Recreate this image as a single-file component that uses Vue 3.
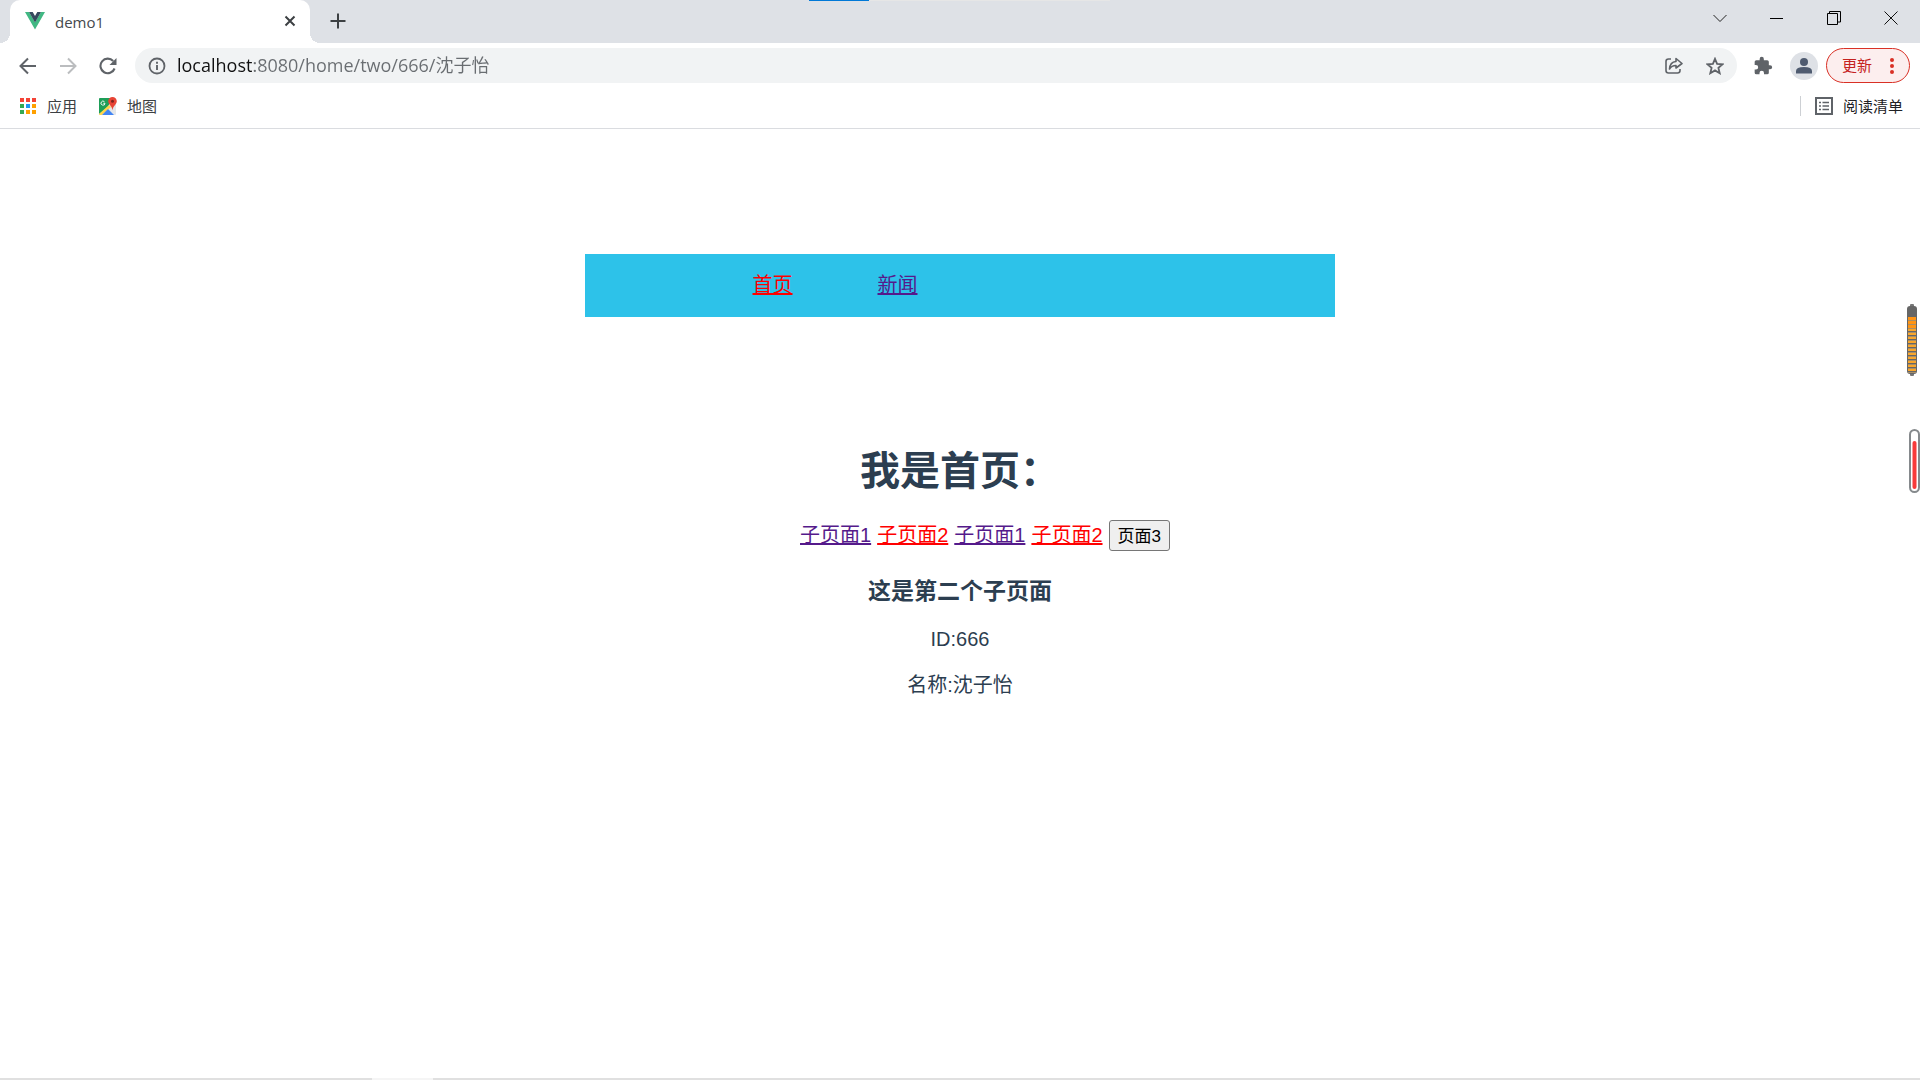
<script setup>
import { ref } from 'vue'

const address = ref('localhost:8080/home/two/666/沈子怡')
const childLinks = [
  { label: '子页面1', active: false },
  { label: '子页面2', active: true },
  { label: '子页面1', active: false },
  { label: '子页面2', active: true },
]
const appColors = ['#f44336', '#f44336', '#f44336', '#34a853', '#2196f3', '#ffa000', '#34a853', '#ffa000', '#ffa000']
</script>

<template>
  <div class="browser">
    <header class="chrome">
      <div class="tab-strip">
        <div class="tab">
          <svg class="icon" width="20" height="18" viewBox="0 0 20 18">
            <path fill="#41b883" d="M0 0h4l6 10.300L16 0h4L10 17.500z" />
            <path fill="#35495e" d="M4 0h3.700L10 4l2.300-4H16L10 10.400z" />
          </svg>
          <span class="tab-title">demo1</span>
          <button class="tab-close" aria-label="关闭标签页">
            <svg class="icon" width="12" height="12" viewBox="0 0 12 12"><path d="M1.500 1.500l9 9m0-9l-9 9" stroke="#3c4043" stroke-width="2" /></svg>
          </button>
        </div>
        <button class="new-tab" aria-label="新标签页">
          <svg class="icon" width="16" height="16" viewBox="0 0 16 16"><path d="M8 .5v15M.5 8h15" stroke="#3c4043" stroke-width="2" /></svg>
        </button>
        <div class="window-controls">
          <button aria-label="搜索标签页"><svg class="icon" width="14" height="14" viewBox="0 0 14 14"><path d="M.5 4L7 10.500 13.500 4" fill="none" stroke="#222" /></svg></button>
          <button aria-label="最小化"><svg class="icon" width="14" height="14" viewBox="0 0 14 14"><path d="M0 7.500h13" stroke="#000" /></svg></button>
          <button aria-label="还原"><svg class="icon" width="14" height="14" viewBox="0 0 14 14"><path d="M.5 2.500h10v11H.5zM2.500 2.500v-2h11v10.500h-3" fill="none" stroke="#000" /></svg></button>
          <button aria-label="关闭"><svg class="icon" width="14" height="14" viewBox="0 0 14 14"><path d="M.5 .5l13 13m0-13l-13 13" stroke="#111" /></svg></button>
        </div>
        <div class="load-track"><div class="load-value"></div></div>
      </div>

      <div class="toolbar">
        <button class="tool" aria-label="后退"><svg class="icon" width="18" height="18" viewBox="0 0 18 18"><path d="M17 9H2M9 1.500L1.500 9 9 16.500" fill="none" stroke="#5f6368" stroke-width="2" /></svg></button>
        <button class="tool" aria-label="前进"><svg class="icon" width="18" height="18" viewBox="0 0 18 18"><path d="M1 9h15M9 1.500L16.500 9 9 16.500" fill="none" stroke="#bbbdbf" stroke-width="2" /></svg></button>
        <button class="tool" aria-label="重新加载"><svg class="icon" width="18" height="18" viewBox="0 0 18 18"><path d="M15.600 11.500A7.300 7.300 0 1 1 14.200 4" fill="none" stroke="#5f6368" stroke-width="2.100" /><path d="M17.500 1v7h-7z" fill="#5f6368" /></svg></button>
        <div class="omnibox">
          <svg class="icon" width="18" height="18" viewBox="0 0 18 18"><circle cx="9" cy="9" r="7.500" fill="none" stroke="#5f6368" stroke-width="1.800" /><path d="M9 8v5M9 4.700v2" stroke="#5f6368" stroke-width="1.900" /></svg>
          <input v-model="address" class="address" type="text" aria-label="地址栏" />
          <button class="box-tool" aria-label="分享"><svg class="icon" width="18" height="18" viewBox="0 0 18 18"><path d="M6 2H3.500Q1 2 1 4.500v9Q1 16 3.500 16h9q2.500 0 2.500-2.500V12M11 1.500L17 6.500 11 11V8.500Q6.500 8.500 4.500 12 5 5 11 4.500z" fill="none" stroke="#5f6368" stroke-width="1.600" stroke-linejoin="round" /></svg></button>
          <button class="box-tool" aria-label="收藏"><svg class="icon" width="18" height="18" viewBox="0 0 18 18"><path d="M9 1.800l2.100 5 5.500.500-4.200 3.600 1.300 5.300L9 13.400l-4.700 2.800 1.300-5.300-4.200-3.600 5.500-.5z" fill="none" stroke="#5f6368" stroke-width="1.800" /></svg></button>
        </div>
        <button class="tool extensions" aria-label="扩展程序"><svg class="icon" width="20" height="20" viewBox="0 0 24 24"><path fill="#5f6368" d="M20.500 11H19V7a2 2 0 0 0-2-2h-4V3.500a2.500 2.500 0 0 0-5 0V5H4a2 2 0 0 0-2 2v3.800h1.500a2.700 2.700 0 0 1 0 5.400H2V20a2 2 0 0 0 2 2h3.800v-1.500a2.700 2.700 0 0 1 5.400 0V22H17a2 2 0 0 0 2-2v-4h1.500a2.500 2.500 0 0 0 0-5z" /></svg></button>
        <button class="avatar" aria-label="用户"><svg class="icon" width="28" height="28" viewBox="0 0 28 28"><circle cx="14" cy="14" r="14" fill="#dee1e6" /><circle cx="14" cy="10" r="4" fill="#4f5b70" /><path d="M6 21.500V19q0-4 8-4t8 4v2.500z" fill="#4f5b70" /></svg></button>
        <button class="update">
          <span>更新</span>
          <svg class="icon" width="4" height="16" viewBox="0 0 4 16"><g fill="#d93025"><circle cx="2" cy="2" r="2" /><circle cx="2" cy="8" r="2" /><circle cx="2" cy="14" r="2" /></g></svg>
        </button>
      </div>

      <nav class="bookmarks">
        <a href="#apps" class="bookmark">
          <svg class="icon" width="18" height="18" viewBox="0 0 18 18">
            <rect v-for="(color, i) in appColors" :key="i" :x="(i % 3) * 6 + 1" :y="Math.floor(i / 3) * 6 + 1" width="4" height="4" :fill="color" />
          </svg>
          <span>应用</span>
        </a>
        <a href="#maps" class="bookmark">
          <svg class="icon" width="18" height="18" viewBox="0 0 18 18">
            <rect y="1" width="17" height="17" rx="1" fill="#e4e6e8" />
            <path d="M1 1h12L9 10 0 17V2q0-1 1-1z" fill="#1e9e58" />
            <path d="M0 17L10 8l2 2-9 8H1q-1 0-1-1z" fill="#ffd54a" />
            <path d="M3 18l6-6 6 6z" fill="#4285f4" />
            <path d="M5.500 4.800a2 2 0 1 0 .5 1.500H4.300" fill="none" stroke="#fff" stroke-width=".9" />
            <path d="M13.500 0a4.300 4.300 0 0 0-4.300 4.300c0 3 3.700 4.500 4.300 9 .6-4.500 4.300-6 4.300-9A4.300 4.300 0 0 0 13.500 0z" fill="#e84435" />
            <circle cx="13.500" cy="4.300" r="1.500" fill="#7b231d" />
          </svg>
          <span>地图</span>
        </a>
        <a href="#reading-list" class="bookmark reading">
          <svg class="icon" width="18" height="18" viewBox="0 0 18 18"><rect x="1" y="1" width="16" height="16" fill="none" stroke="#5f6368" stroke-width="2" /><path d="M4 5.500h2M4 9h2M4 12.500h2M7.500 5.500H14M7.500 9H14M7.500 12.500H14" stroke="#5f6368" stroke-width="1.500" /></svg>
          <span>阅读清单</span>
        </a>
      </nav>
    </header>

    <main class="page">
      <nav class="site-nav">
        <a href="#home" class="active">首页</a>
        <a href="#news">新闻</a>
      </nav>
      <h1>我是首页：</h1>
      <div class="child-nav">
        <a v-for="(link, i) in childLinks" :key="i" href="#child" :class="{ active: link.active }">{{ link.label }}</a>
        <button class="page-button">页面3</button>
      </div>
      <h3>这是第二个子页面</h3>
      <p>ID:666</p>
      <p>名称:沈子怡</p>
    </main>

    <svg class="gauge battery" width="10" height="72" viewBox="0 0 10 72">
      <rect x="3" width="4" height="72" rx="1" fill="#777" />
      <rect y="2" width="10" height="68" rx="3" fill="#666" />
      <g v-for="n in 14" :key="n">
        <rect x="1" :y="9 + n * 4" width="8" :height="n < 4 ? 3 : 2" :fill="n < 4 ? '#ff9414' : '#f9a62b'" />
        <rect x="1" :y="12 + n * 4" width="8" height="1" fill="#a98f68" />
      </g>
    </svg>
    <svg class="gauge thermometer" width="11" height="64" viewBox="0 0 11 64">
      <rect x="1" y="1" width="9" height="62" rx="4.500" fill="#fff" stroke="#85898c" stroke-width="2" />
      <rect x="3.500" y="12" width="4" height="48" rx="2" fill="#f83a3a" />
    </svg>
    <footer class="taskbar-edge"><div class="edge-light"></div></footer>
  </div>
</template>

<style>
body {
  margin: 0;
  background: #fff;
}
</style>

<style scoped>
.browser {
  position: relative;
  display: flex;
  flex-direction: column;
  min-height: 100vh;
  overflow: hidden;
  background: #fff;
  font-family: "Liberation Sans", "Noto Sans CJK SC", sans-serif;
}
.icon {
  display: block;
  flex: none;
}
button {
  padding: 0;
  border: 0;
  background: none;
  font-family: inherit;
}
.chrome {
  border-bottom: 1px solid #dadce0;
  font-family: "Open Sans", "Noto Sans CJK SC", sans-serif;
}
.tab-strip {
  position: relative;
  display: flex;
  height: 43px;
  padding-left: 10px;
  background: #dee1e6;
}
.tab {
  position: relative;
  display: flex;
  align-items: center;
  box-sizing: border-box;
  width: 300px;
  padding: 0 12px 2px 15px;
  border-radius: 10px 10px 0 0;
  background: #fff;
}
.tab::before,
.tab::after {
  content: "";
  position: absolute;
  bottom: 0;
  width: 10px;
  height: 10px;
}
.tab::before {
  right: 100%;
  background: radial-gradient(circle at 0 0, #dee1e6 10px, #fff 10px);
}
.tab::after {
  left: 100%;
  background: radial-gradient(circle at 100% 0, #dee1e6 10px, #fff 10px);
}
.tab-title {
  flex: 1;
  margin-left: 10px;
  padding-top: 2px;
  color: #45494d;
  font-size: 15px;
  line-height: 20px;
}
.tab-close {
  padding: 2px;
}
.new-tab {
  display: flex;
  align-items: center;
  justify-content: center;
  width: 36px;
  margin-left: 10px;
  padding-bottom: 2px;
}
.window-controls {
  display: flex;
  height: 36px;
  margin-left: auto;
  padding-right: 1px;
}
.window-controls button {
  display: flex;
  align-items: center;
  justify-content: center;
  width: 57px;
}
.load-track {
  position: absolute;
  top: 0;
  left: 50%;
  width: 301px;
  height: 1px;
  margin-left: -151px;
  background: #e6e6e6;
}
.load-value {
  width: 60px;
  height: 1px;
  background: #0078d7;
}
.toolbar {
  display: flex;
  align-items: center;
  height: 45px;
  padding: 0 10px 0 8px;
}
.tool {
  display: flex;
  align-items: center;
  justify-content: center;
  width: 40px;
  height: 36px;
}
.omnibox {
  display: flex;
  flex: 1;
  align-items: center;
  height: 35px;
  margin-left: 7px;
  padding: 0 2px 0 13px;
  border-radius: 18px;
  background: #f1f3f4;
}
.address {
  flex: 1;
  min-width: 0;
  height: 28px;
  margin-left: 11px;
  padding: 0 0 3px;
  box-sizing: border-box;
  border: 0;
  outline: 0;
  background: linear-gradient(to right, #111 77px, #696d71 77px);
  background-clip: text;
  -webkit-text-fill-color: transparent;
  color: #696d71;
  font-family: inherit;
  font-size: 18px;
}
.box-tool {
  display: flex;
  align-items: center;
  justify-content: center;
  width: 41px;
  height: 35px;
}
.extensions {
  margin-left: 6px;
}
.avatar {
  margin: 0 8px 0 7px;
}
.update {
  display: flex;
  align-items: center;
  justify-content: space-between;
  box-sizing: border-box;
  width: 84px;
  height: 35px;
  padding: 0 15px;
  border: 1px solid #d93025;
  border-radius: 18px;
  background: #fceeee;
  color: #c5221f;
  font-size: 15px;
  line-height: 20px;
}
.update span {
  padding-bottom: 2px;
}
.bookmarks {
  display: flex;
  align-items: center;
  gap: 22px;
  height: 40px;
  padding: 0 17px 4px 19px;
  box-sizing: border-box;
}
.bookmark {
  display: flex;
  align-items: center;
  gap: 10px;
  color: #3c4043;
  font-size: 15px;
  line-height: 20px;
  text-decoration: none;
}
.reading {
  margin-left: auto;
  padding-left: 14px;
  border-left: 1px solid #cdd0d4;
  color: #202124;
}
.page {
  flex: 1;
  padding-top: 125px;
  color: #2c3e50;
  font-size: 20px;
  line-height: 26px;
  text-align: center;
}
.page a {
  color: #551a8b;
  text-decoration: underline;
}
.page a.active {
  color: #f00;
}
.site-nav {
  display: flex;
  align-items: center;
  box-sizing: border-box;
  width: 750px;
  max-width: 100%;
  height: 63px;
  margin: 0 auto;
  padding: 0 0 2px 125px;
  background: #2dc2e9;
}
.site-nav a {
  width: 125px;
}
h1 {
  margin: 126px 0 0;
  font-size: 40px;
  line-height: 56px;
}
.child-nav {
  display: flex;
  align-items: center;
  justify-content: center;
  gap: 6px;
  margin-top: 21px;
  padding-left: 50px;
}
.child-nav a {
  padding-bottom: 2px;
}
.page-button {
  height: 31px;
  padding: 0 8px 2px;
  border: 1px solid #767676;
  border-radius: 3px;
  background: #efefef;
  color: #000;
  font-size: 17px;
}
h3 {
  margin: 25px 0 0;
  font-size: 23px;
  line-height: 30px;
}
p {
  margin: 20px 0 0;
}
.gauge {
  position: absolute;
}
.battery {
  top: 304px;
  right: 3px;
}
.thermometer {
  top: 429px;
  right: 0;
}
.taskbar-edge {
  height: 2px;
  padding-left: 372px;
  background: #e0e0e0;
}
.edge-light {
  width: 61px;
  height: 2px;
  background: #f5f5f5;
}
</style>
